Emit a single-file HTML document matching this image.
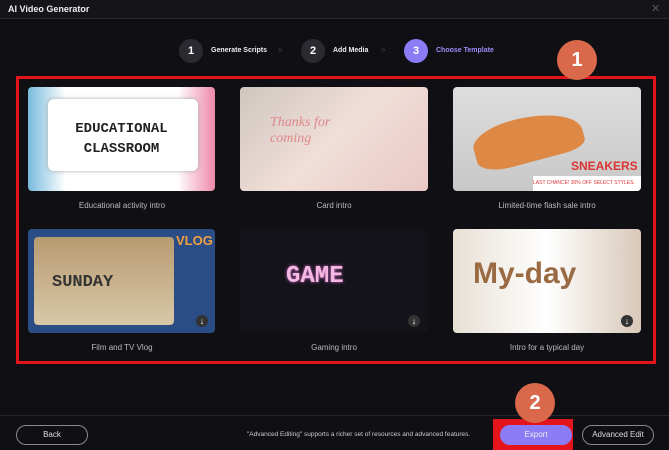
<!DOCTYPE html><html><head><style>
body{margin:0;width:669px;height:450px;background:#101014;font-family:"Liberation Sans",sans-serif;overflow:hidden;position:relative;color:#ddd}
.a{position:absolute}
.t{border-radius:4px;overflow:hidden}
.lbl{font-size:8px;color:#bbb;text-align:center;width:188px}
.step{width:24px;height:24px;border-radius:50%;background:#2a2a30;color:#fff;font-size:11px;font-weight:bold;text-align:center;line-height:24px}
.st{font-size:7px;font-weight:bold;color:#eee}
.dl{width:12px;height:12px;border-radius:50%;background:#333;color:#fff;font-size:9px;text-align:center;line-height:12px}
.btn{height:18px;border:1px solid #888;border-radius:10px;font-size:8px;text-align:center;line-height:18px;color:#ddd}
.oc{background:#d9694a;border-radius:50%;color:#fff;font-weight:bold;text-align:center;font-size:20px}
</style></head><body>
<div class="a" style="left:0;top:0;width:669px;height:18px;background:#151519;border-bottom:1px solid #2a2a2e"></div>
<div class="a" style="left:8px;top:4px;font-size:9px;font-weight:bold;color:#eee">AI Video Generator</div>
<div class="a" style="left:651px;top:2px;font-size:11px;color:#555">✕</div>
<div class="a step" style="left:179px;top:39px">1</div><div class="a st" style="left:211px;top:47px">Generate Scripts</div>
<div class="a" style="left:278px;top:45px;font-size:8px;color:#444">»</div>
<div class="a step" style="left:301px;top:39px">2</div><div class="a st" style="left:333px;top:47px">Add Media</div>
<div class="a" style="left:381px;top:45px;font-size:8px;color:#444">»</div>
<div class="a step" style="left:404px;top:39px;background:#8b7cf6">3</div><div class="a st" style="left:436px;top:47px;color:#9d8cf8">Choose Template</div>
<div class="a" style="left:16px;top:76px;width:634px;height:282px;border:3px solid #e4141c"></div>
<!-- row1 -->
<div class="a t" style="left:28px;top:87px;width:187px;height:104px;background:linear-gradient(90deg,#7bd,#fff 20%,#fff 80%,#e8a)"><div class="a" style="left:20px;top:12px;width:150px;height:72px;background:#fff;box-shadow:0 0 4px #aaa;border-radius:6px"></div><div class="a" style="left:0;top:32px;width:187px;text-align:center;font:bold 14px 'Liberation Mono',monospace;color:#222;line-height:20px">EDUCATIONAL<br>CLASSROOM</div></div>
<div class="a lbl" style="left:28px;top:201px">Educational activity intro</div>
<div class="a t" style="left:240px;top:87px;width:188px;height:104px;background:linear-gradient(135deg,#cfc6c0,#f1ded8 50%,#e9c8c4)"><div class="a" style="left:30px;top:28px;font:italic 14px 'Liberation Serif',serif;color:#d88">Thanks for<br>coming</div></div>
<div class="a lbl" style="left:240px;top:201px">Card intro</div>
<div class="a t" style="left:453px;top:87px;width:188px;height:104px;background:linear-gradient(180deg,#ddd,#c8c8c8)"><div class="a" style="left:20px;top:30px;width:110px;height:45px;background:#d84;border-radius:40% 60% 20% 30%;transform:rotate(-15deg)"></div><div class="a" style="left:118px;top:72px;font:bold 12px 'Liberation Sans';color:#d33">SNEAKERS</div><div class="a" style="left:80px;top:89px;width:108px;height:15px;background:#fff;font-size:5px;color:#d33;line-height:15px">LAST CHANCE! 30% OFF SELECT STYLES.</div></div>
<div class="a lbl" style="left:453px;top:201px">Limited-time flash sale intro</div>
<!-- row2 -->
<div class="a t" style="left:28px;top:229px;width:187px;height:104px;background:#2b4d86"><div class="a" style="left:6px;top:8px;width:140px;height:88px;background:linear-gradient(#b89a70,#d8c8a8);border-radius:4px"></div><div class="a" style="left:24px;top:44px;font:bold 17px 'Liberation Mono',monospace;color:#333">SUNDAY</div><div class="a" style="left:148px;top:4px;font:bold 13px 'Liberation Sans';color:#f0a040">VLOG</div><div class="a dl" style="left:168px;top:86px">↓</div></div>
<div class="a lbl" style="left:28px;top:343px">Film and TV Vlog</div>
<div class="a t" style="left:240px;top:229px;width:188px;height:104px;background:#15131a"><div class="a" style="left:46px;top:34px;font:bold 24px 'Liberation Mono',monospace;color:#f5b8e0;text-shadow:0 0 3px #c6c">GAME</div><div class="a dl" style="left:168px;top:86px">↓</div></div>
<div class="a lbl" style="left:240px;top:343px">Gaming intro</div>
<div class="a t" style="left:453px;top:229px;width:188px;height:104px;background:linear-gradient(90deg,#e8e0d6,#fff 50%,#d8c8b8)"><div class="a" style="left:20px;top:28px;font:bold 30px 'Liberation Sans';color:#9a6a42">My-day</div><div class="a dl" style="left:168px;top:86px">↓</div></div>
<div class="a lbl" style="left:453px;top:343px">Intro for a typical day</div>
<!-- bottom -->
<div class="a" style="left:0;top:415px;width:669px;height:1px;background:#26262a"></div>
<div class="a btn" style="left:16px;top:425px;width:70px">Back</div>
<div class="a" style="left:247px;top:431px;font-size:6.5px;color:#ccc">"Advanced Editing" supports a richer set of resources and advanced features.</div>
<div class="a" style="left:493px;top:419px;width:80px;height:31px;background:#e4141c"></div>
<div class="a btn" style="left:500px;top:425px;width:70px;background:#8b7cf6;border-color:#8b7cf6;color:#eee">Export</div>
<div class="a btn" style="left:582px;top:425px;width:70px">Advanced Edit</div>
<div class="a oc" style="left:557px;top:40px;width:40px;height:40px;line-height:40px">1</div>
<div class="a oc" style="left:515px;top:383px;width:40px;height:40px;line-height:40px">2</div>
</body></html>
